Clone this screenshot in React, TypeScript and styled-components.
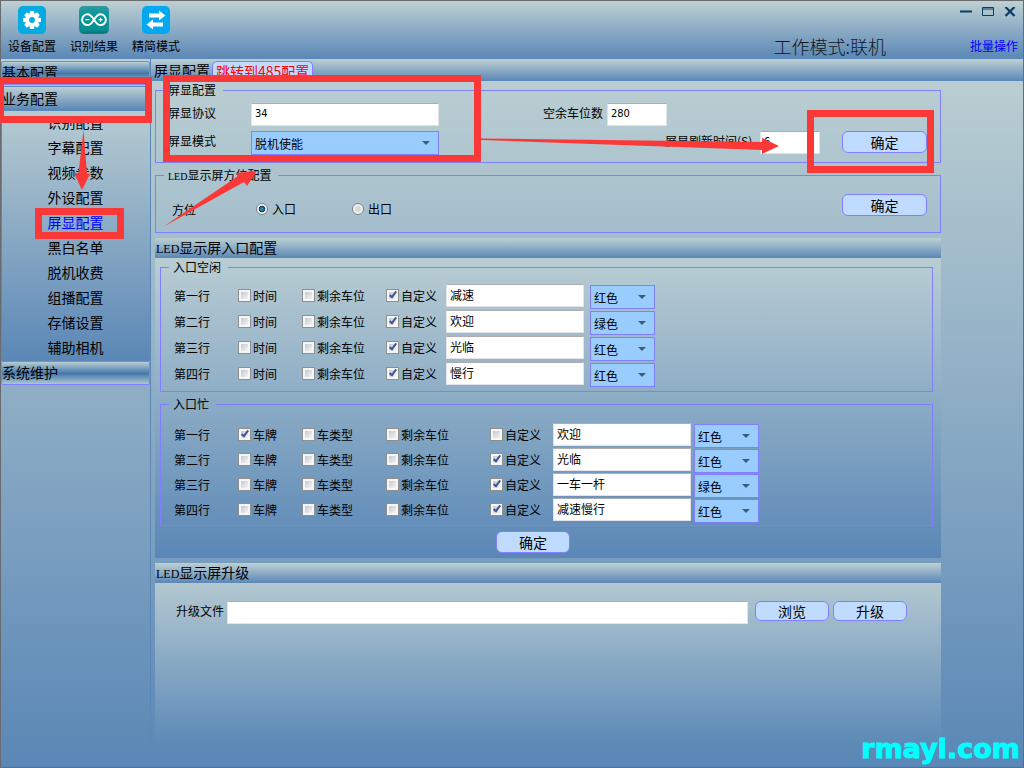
import React, { useId } from 'react';
import styled, { createGlobalStyle, css } from 'styled-components';

const LIGHT = '#bdd0d3';
const DEEP = '#5a87b6';
const LINE = '#8080ff';
const FACE = '#bfdbff';
const MARK = '#fb3838';

const GlobalStyle = createGlobalStyle`
  *, *::before, *::after { box-sizing: border-box; }
  html, body { margin: 0; padding: 0; }
  body, button, input, select {
    font-family: "Noto Sans CJK SC", "Liberation Sans", sans-serif;
    font-size: 12px;
    font-weight: 400;
    color: #000;
  }
`;

const Window = styled.div`
  position: relative;
  display: flex;
  flex-direction: column;
  min-height: 100vh;
  border: 1px solid #696b6e;
`;

const Header = styled.header`
  display: flex;
  justify-content: space-between;
  height: 58px;
  background: linear-gradient(${LIGHT}, ${DEEP});
`;

const Toolbar = styled.nav`
  display: flex;
  gap: 14px;
  padding: 5px 0 0 7px;
`;

const ToolButton = styled.button`
  display: flex;
  flex-direction: column;
  align-items: center;
  gap: 4px;
  width: 48px;
  padding: 0;
  border: 0;
  background: none;
  line-height: 16px;
  white-space: nowrap;
`;

const HeaderSide = styled.div`
  display: flex;
  flex-direction: column;
  justify-content: space-between;
  align-items: flex-end;
  padding: 4px 5px 1px 0;
`;

const WindowControls = styled.div`
  display: flex;
  gap: 6px;
`;

const ControlButton = styled.button`
  display: flex;
  align-items: center;
  justify-content: center;
  width: 16px;
  height: 14px;
  padding: 0;
  border: 0;
  background: none;
`;

const StatusRow = styled.div`
  display: flex;
  align-items: center;
  gap: 84px;
  height: 24px;
`;

const WorkMode = styled.span`
  font-size: 18px;
  font-weight: 300;
  line-height: 24px;
  color: #10181e;
`;

const BatchLink = styled.a`
  color: #0000ff;
  line-height: 24px;
  text-decoration: none;
`;

const Body = styled.div`
  display: flex;
  flex: 1;
  background: linear-gradient(${LIGHT}, ${DEEP});
`;

const Sidebar = styled.aside`
  width: 150px;
  flex: none;
  padding-top: 2px;
  border-right: 1px solid ${DEEP};
`;

const NavHead = styled.button<{ $open?: boolean }>`
  display: block;
  width: 100%;
  height: ${p => (p.$open ? 25 : 24)}px;
  margin-top: ${p => (p.$open ? 1 : 0)}px;
  padding: 0 0 2px;
  border: 1px solid ${p => (p.$open ? DEEP : LINE)};
  border-radius: 2px;
  background: ${p =>
    p.$open
      ? `linear-gradient(${LIGHT}, ${DEEP})`
      : 'linear-gradient(#b9cdd3, #4478ac 52%, #b0c5d0)'};
  font-size: 14px;
  line-height: 18px;
  text-align: left;
`;

const NavList = styled.ul`
  margin: 0;
  padding: 0 1px 0 0;
  list-style: none;
  border-left: 1px solid ${DEEP};
  background: linear-gradient(#b7cbd2, ${DEEP});
`;

const NavItem = styled.a<{ $active?: boolean }>`
  display: block;
  height: 25px;
  line-height: 23px;
  font-size: 14px;
  text-align: center;
  text-decoration: none;
  color: ${p => (p.$active ? '#0000ff' : '#000')};
`;

const Main = styled.main`
  flex: 1;
  min-width: 0;
`;

const bar = css`
  background: linear-gradient(${LIGHT}, ${DEEP});
  font-size: 14px;
`;

const TabBar = styled.div`
  ${bar}
  display: flex;
  align-items: flex-end;
  gap: 2px;
  height: 22px;
  padding-left: 3px;
`;

const Tab = styled.button<{ $jump?: boolean }>`
  height: ${p => (p.$jump ? 20 : 22)}px;
  padding: 0 ${p => (p.$jump ? 3 : 0)}px 1px;
  border: ${p => (p.$jump ? `1px solid ${LINE}` : '0')};
  border-bottom: 0;
  border-radius: 5px 5px 0 0;
  background: ${p => (p.$jump ? FACE : 'none')};
  color: ${p => (p.$jump ? '#ff0000' : '#000')};
  font-size: 14px;
  line-height: 18px;
  white-space: nowrap;
`;

const Content = styled.div`
  display: flex;
  flex-direction: column;
  padding: 1px 82px 0 4px;
`;

const Group = styled.fieldset<{ $gap?: number }>`
  min-width: 0;
  margin: ${p => p.$gap ?? 0}px 0 0;
  padding: 0;
  border: 1px solid ${LINE};
`;

const Legend = styled.legend`
  height: 16px;
  margin-left: 8px;
  padding: 0 7px 0 4px;
  line-height: 16px;
`;

const Latin = styled.span<{ $size: number }>`
  font-family: "Liberation Serif", serif;
  font-size: ${p => p.$size}px;
  line-height: 1;
`;

const Stack = styled.div`
  display: flex;
  flex-direction: column;
  gap: 5px;
  padding: 5px 13px 7px 12px;
`;

const FieldRow = styled.div`
  display: flex;
  align-items: flex-start;
`;

const FieldLabel = styled.label<{ $width: number; $indent?: number }>`
  width: ${p => p.$width}px;
  margin-left: ${p => p.$indent ?? 0}px;
  flex: none;
  line-height: 20px;
  white-space: nowrap;
`;

const RightSide = styled.div`
  display: flex;
  margin-left: auto;
`;

const TextBox = styled.input<{ $width?: number }>`
  width: ${p => (p.$width ? `${p.$width}px` : '100%')};
  min-width: 0;
  height: 23px;
  padding: 0 3px 3px;
  border: 1px solid #e2e3ea;
  border-top-color: #abadb3;
  border-radius: 1px;
  background: #fff;
  outline: 0;
  font-family: "DejaVu Sans Condensed", "Noto Sans CJK SC", sans-serif;
  font-size: 11px;
`;

const WordBox = styled(TextBox)`
  font-family: "Noto Sans CJK SC", sans-serif;
  font-size: 12px;
`;

const SelectFrame = styled.span<{ $width: number }>`
  position: relative;
  display: block;
  width: ${p => p.$width}px;
  height: 24px;
  flex: none;

  &::after {
    content: '';
    position: absolute;
    top: 10px;
    right: 9px;
    border: 4px solid transparent;
    border-top-color: #3c5d78;
    border-bottom: 0;
    pointer-events: none;
  }
`;

const Select = styled.select`
  appearance: none;
  width: 100%;
  height: 24px;
  padding: 0 3px;
  border: 1px solid ${LINE};
  border-radius: 0;
  background: #99ccff;
  outline: 0;
`;

const PushButton = styled.button<{ $width: number; $low?: boolean }>`
  flex: none;
  width: ${p => p.$width}px;
  height: ${p => (p.$low ? 20 : 22)}px;
  padding: 0 0 1px;
  border: 1px solid ${LINE};
  border-radius: 6px;
  background: ${FACE};
  font-size: 14px;
  line-height: 18px;
`;

const ConfirmButton = styled(PushButton)`
  display: block;
  margin: 5px 0 0 336px;
`;

const PlaceRow = styled.div`
  display: grid;
  grid-template-columns: 84px 96px 1fr auto;
  align-items: center;
  height: 49px;
  padding: 11px 13px 8px 16px;
`;

const TopCell = styled.div`
  align-self: start;
  display: flex;
`;

const OptionLabel = styled.label<{ $gap?: number }>`
  display: flex;
  align-items: center;
  gap: ${p => p.$gap ?? 2}px;
  line-height: 16px;
  white-space: nowrap;
`;

const Radio = styled.input`
  appearance: none;
  width: 12px;
  height: 12px;
  margin: 0;
  border: 1px solid #7c8489;
  border-radius: 50%;
  background: radial-gradient(circle, #d5d9db 30%, #fafafa 70%);

  &:checked {
    background: radial-gradient(circle, #3fa6d0 0, #123c5c 42%, #f2f5f7 52%);
  }
`;

const Check = styled.input`
  appearance: none;
  position: relative;
  width: 13px;
  height: 13px;
  margin: 0;
  border: 1px solid #8e8f8f;
  background: linear-gradient(135deg, #c4c9d0, #f4f4f4) content-box, #f6f6f6;
  padding: 2px;

  &:checked::after {
    content: '';
    position: absolute;
    top: 0;
    left: 4px;
    width: 4px;
    height: 8px;
    border: solid #3f569b;
    border-width: 0 2px 2px 0;
    transform: rotate(38deg);
  }
`;

const SectionTitle = styled.h2`
  ${bar}
  margin: 5px 0 0;
  padding-left: 1px;
  height: 20px;
  font-weight: 400;
  line-height: 19px;
`;

const SectionBody = styled.section`
  padding: 1px 8px 5px 5px;
  background: linear-gradient(#b9cdd3, ${DEEP});
`;

const UpgradeBody = styled.section`
  display: flex;
  align-items: flex-start;
  min-height: 160px;
  padding: 18px 34px 0 21px;
  background: linear-gradient(#b3c8d1, #5d8ab7);
`;

const UpgradeButtons = styled.div`
  display: flex;
  gap: 4px;
  margin-left: 7px;
`;

const Lines = styled.div<{ $top: number; $bottom: number }>`
  padding: ${p => p.$top}px 0 ${p => p.$bottom}px 13px;
`;

const Line = styled.div<{ $columns: string; $height: number }>`
  display: grid;
  grid-template-columns: ${p => p.$columns};
  align-items: center;
  height: ${p => p.$height}px;

  ${SelectFrame} {
    align-self: start;
    margin-top: 3px;
  }
  ${WordBox} {
    width: 138px;
  }
`;

const Markup = styled.svg`
  position: absolute;
  top: -1px;
  left: -1px;
  width: 1024px;
  height: 768px;
  pointer-events: none;
`;

const Watermark = styled.span`
  position: absolute;
  right: 3px;
  bottom: 3px;
  font-family: "DejaVu Sans", sans-serif;
  font-size: 27px;
  font-weight: 700;
  line-height: 30px;
  color: #00ffff;
  -webkit-text-stroke: 1px #00ffff;
`;

const GearIcon = () => (
  <svg width="28" height="28" viewBox="0 0 28 28" aria-hidden="true">
    <rect width="28" height="28" rx="5" fill="#03abe0" />
    <g fill="#fff">
      {[0, 45, 90, 135].map(a => (
        <rect key={a} x="11.8" y="5" width="4.4" height="18" rx="1" transform={`rotate(${a} 14 14)`} />
      ))}
      <circle cx="14" cy="14" r="6.8" />
    </g>
    <circle cx="14" cy="14" r="2.9" fill="#03abe0" />
  </svg>
);

const InfinityIcon = () => (
  <svg width="30" height="28" viewBox="0 0 30 28" aria-hidden="true">
    <defs>
      <linearGradient id="teal" x1="0" y1="0" x2="0" y2="1">
        <stop offset="0" stopColor="#2f9c9e" />
        <stop offset="0.3" stopColor="#06989c" />
        <stop offset="0.85" stopColor="#058f94" />
        <stop offset="1" stopColor="#0b6c74" />
      </linearGradient>
    </defs>
    <rect width="30" height="28" rx="5" fill="url(#teal)" stroke="#4d8f99" strokeWidth="0.6" />
    <path
      d="M15 13.700C12.500 9.800 10.900 8.300 8.500 8.300a5.400 5.400 0 0 0 0 10.800c2.400 0 4-1.500 6.500-5.400C17.500 9.800 19.100 8.300 21.500 8.300a5.400 5.400 0 0 1 0 10.800c-2.400 0-4-1.500-6.500-5.400z"
      fill="none"
      stroke="#fff"
      strokeWidth="2"
    />
    <path d="M6.500 13.700h4M19.500 13.700h4M21.500 11.700v4" stroke="#fff" strokeWidth="1.200" />
  </svg>
);

const SwapIcon = () => (
  <svg width="28" height="28" viewBox="0 0 28 28" aria-hidden="true">
    <rect width="28" height="28" rx="5" fill="#04a8f0" />
    <path d="M7 7.500h10V4.500L23.500 9.500 17 14.500V11.500H7zM21 16.500H11v-3L4.500 18.500 11 23.500V20.500h10z" fill="#fff" />
  </svg>
);

type ColorName = '红色' | '绿色';

const ColorSelect = ({ value, label }: { value: ColorName; label: string }) => (
  <SelectFrame $width={65}>
    <Select defaultValue={value} aria-label={label}>
      <option>红色</option>
      <option>绿色</option>
    </Select>
  </SelectFrame>
);

const CheckOption = ({ text, on }: { text: string; on?: boolean }) => (
  <OptionLabel>
    <Check type="checkbox" defaultChecked={on} />
    {text}
  </OptionLabel>
);

interface DisplayLine {
  name: string;
  options: { text: string; on?: boolean }[];
  words: string;
  color: ColorName;
}

const idleLine = (name: string, words: string, color: ColorName): DisplayLine => ({
  name,
  options: [{ text: '时间' }, { text: '剩余车位' }, { text: '自定义', on: true }],
  words,
  color,
});

const busyLine = (name: string, words: string, color: ColorName, plate = false): DisplayLine => ({
  name,
  options: [{ text: '车牌', on: plate }, { text: '车类型' }, { text: '剩余车位' }, { text: '自定义', on: !plate }],
  words,
  color,
});

const idle = [
  idleLine('第一行', '减速', '红色'),
  idleLine('第二行', '欢迎', '绿色'),
  idleLine('第三行', '光临', '红色'),
  idleLine('第四行', '慢行', '红色'),
];

const busy = [
  busyLine('第一行', '欢迎', '红色', true),
  busyLine('第二行', '光临', '红色'),
  busyLine('第三行', '一车一杆', '绿色'),
  busyLine('第四行', '减速慢行', '红色'),
];

const DisplayLines = ({ lines, columns, height }: { lines: DisplayLine[]; columns: string; height: number }) => (
  <>
    {lines.map(line => (
      <Line key={line.name} $columns={columns} $height={height}>
        <span>{line.name}</span>
        {line.options.map(o => (
          <CheckOption key={o.text} {...o} />
        ))}
        <WordBox type="text" defaultValue={line.words} aria-label={`${line.name}内容`} />
        <ColorSelect value={line.color} label={`${line.name}颜色`} />
      </Line>
    ))}
  </>
);

const menu = ['识别配置', '字幕配置', '视频参数', '外设配置', '屏显配置', '黑白名单', '脱机收费', '组播配置', '存储设置', '辅助相机'];

export default function App() {
  const id = useId();
  return (
    <Window>
      <GlobalStyle />
      <Header>
        <Toolbar>
          <ToolButton><GearIcon />设备配置</ToolButton>
          <ToolButton><InfinityIcon />识别结果</ToolButton>
          <ToolButton><SwapIcon />精简模式</ToolButton>
        </Toolbar>
        <HeaderSide>
          <WindowControls>
            <ControlButton aria-label="最小化">
              <svg width="12" height="10"><path d="M0 4.500h12" stroke="#0b3c66" strokeWidth="2" /></svg>
            </ControlButton>
            <ControlButton aria-label="最大化">
              <svg width="12" height="10"><path d="M.5 .5h11v8H.5zM0 2h12" fill="none" stroke="#0b3c66" /></svg>
            </ControlButton>
            <ControlButton aria-label="关闭">
              <svg width="12" height="10"><path d="M1.500 0l9 9M10.500 0l-9 9" stroke="#0b3c66" strokeWidth="2.200" /></svg>
            </ControlButton>
          </WindowControls>
          <StatusRow>
            <WorkMode>工作模式:联机</WorkMode>
            <BatchLink href="#batch">批量操作</BatchLink>
          </StatusRow>
        </HeaderSide>
      </Header>

      <Body>
        <Sidebar>
          <NavHead>基本配置</NavHead>
          <NavHead $open>业务配置</NavHead>
          <NavList>
            {menu.map(item => (
              <li key={item}>
                <NavItem href="#menu" $active={item === '屏显配置'}>{item}</NavItem>
              </li>
            ))}
          </NavList>
          <NavHead>系统维护</NavHead>
        </Sidebar>

        <Main>
          <TabBar>
            <Tab>屏显配置</Tab>
            <Tab $jump>跳转到485配置</Tab>
          </TabBar>
          <Content>
            <Group>
              <Legend>屏显配置</Legend>
              <Stack>
                <FieldRow>
                  <FieldLabel $width={83} htmlFor={`${id}p`}>屏显协议</FieldLabel>
                  <TextBox id={`${id}p`} type="text" $width={188} defaultValue="34" />
                  <FieldLabel $width={64} $indent={104} htmlFor={`${id}n`}>空余车位数</FieldLabel>
                  <TextBox id={`${id}n`} type="text" $width={60} defaultValue="280" />
                </FieldRow>
                <FieldRow>
                  <FieldLabel $width={83} htmlFor={`${id}m`}>屏显模式</FieldLabel>
                  <SelectFrame $width={188}>
                    <Select id={`${id}m`} defaultValue="脱机使能">
                      <option>脱机使能</option>
                    </Select>
                  </SelectFrame>
                  <RightSide>
                    <FieldLabel $width={95} htmlFor={`${id}t`}>屏显刷新时间(S)</FieldLabel>
                    <TextBox id={`${id}t`} type="text" $width={60} defaultValue="6" />
                    <FieldLabel as="span" $width={22} />
                    <PushButton $width={85}>确定</PushButton>
                  </RightSide>
                </FieldRow>
              </Stack>
            </Group>

            <Group $gap={4}>
              <Legend><Latin $size={10}>LED</Latin>显示屏方位配置</Legend>
              <PlaceRow>
                <span>方位</span>
                <OptionLabel $gap={4}><Radio type="radio" name="place" defaultChecked />入口</OptionLabel>
                <OptionLabel $gap={4}><Radio type="radio" name="place" />出口</OptionLabel>
                <TopCell><PushButton $width={85}>确定</PushButton></TopCell>
              </PlaceRow>
            </Group>

            <SectionTitle><Latin $size={12}>LED</Latin>显示屏入口配置</SectionTitle>
            <SectionBody>
              <Group>
                <Legend>入口空闲</Legend>
                <Lines $top={7} $bottom={5}>
                  <DisplayLines lines={idle} height={26} columns="64px 64px 84px 60px 144px auto" />
                </Lines>
              </Group>
              <Group $gap={4}>
                <Legend>入口忙</Legend>
                <Lines $top={9} $bottom={4}>
                  <DisplayLines lines={busy} height={25} columns="64px 64px 84px 104px 63px 141px auto" />
                </Lines>
              </Group>
              <ConfirmButton $width={74}>确定</ConfirmButton>
            </SectionBody>

            <SectionTitle><Latin $size={12}>LED</Latin>显示屏升级</SectionTitle>
            <UpgradeBody>
              <FieldLabel $width={51} htmlFor={`${id}f`}>升级文件</FieldLabel>
              <TextBox id={`${id}f`} type="text" />
              <UpgradeButtons>
                <PushButton $width={74} $low>浏览</PushButton>
                <PushButton $width={74} $low>升级</PushButton>
              </UpgradeButtons>
            </UpgradeBody>
          </Content>
        </Main>
      </Body>

      <Markup viewBox="0 0 1024 768" aria-hidden="true">
        <g fill="none" stroke={MARK} strokeWidth="7">
          <rect x="0.500" y="80.500" width="148" height="39" />
          <rect x="166.500" y="78.500" width="311" height="80" />
          <rect x="810.500" y="113.500" width="120" height="56" />
          <rect x="38.500" y="211.500" width="82" height="24" />
        </g>
        <g fill={MARK}>
          <path d="M83.500 130L87 173.500L90 174L82 190L74 173L78.500 173z" />
          <path d="M163 227L238 176L236 173L257 171L247 186L244 182z" />
          <path d="M481 138.500L762 142V138L779 146L762 154V150L481 140z" />
        </g>
      </Markup>
      <Watermark>rmayi.com</Watermark>
    </Window>
  );
}
